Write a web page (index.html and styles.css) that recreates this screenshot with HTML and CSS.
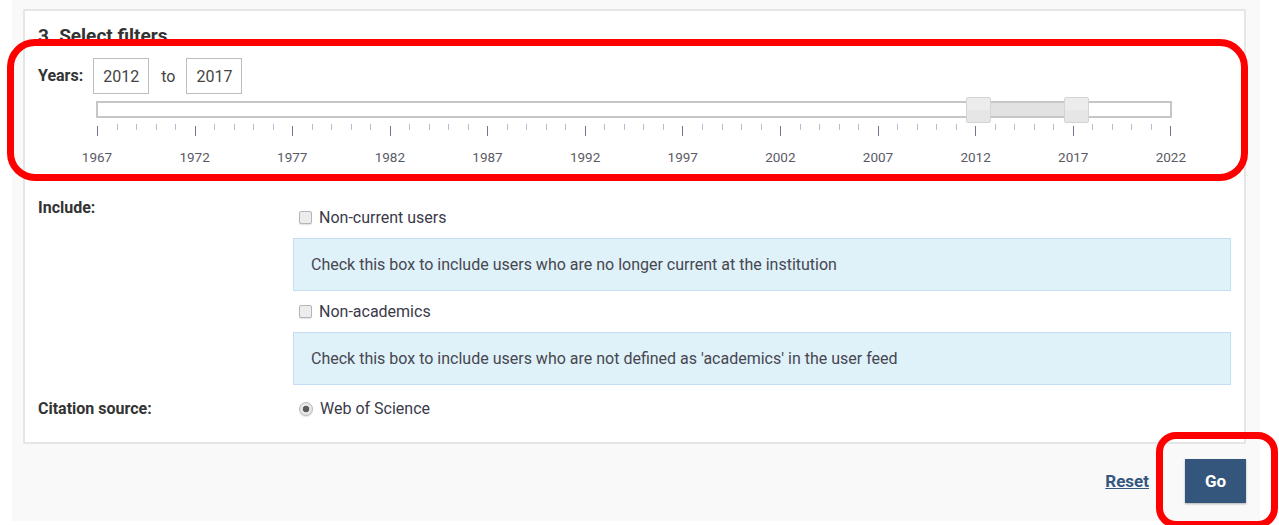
FILE: index.html
```html
<!DOCTYPE html>
<html lang="en">
<head>
<meta charset="utf-8">
<title>Select filters</title>
<link rel="stylesheet" href="styles.css">
</head>
<body>
<div class="page">
  <section class="panel">
    <h3 class="panel-title">3. Select filters</h3>

    <div class="years-row">
      <span class="field-label">Years:</span>
      <input class="year-input" type="text" value="2012">
      <span class="to">to</span>
      <input class="year-input" type="text" value="2017">
    </div>

    <div class="slider">
      <div class="track">
        <div class="range" style="left: 879px; width: 98px;"></div>
        <span class="handle" style="left: 868px;"></span>
        <span class="handle" style="left: 966px;"></span>
      </div>
      <div class="ticks">
        <i class="major"></i><i></i><i></i><i></i><i></i>
        <i class="major"></i><i></i><i></i><i></i><i></i>
        <i class="major"></i><i></i><i></i><i></i><i></i>
        <i class="major"></i><i></i><i></i><i></i><i></i>
        <i class="major"></i><i></i><i></i><i></i><i></i>
        <i class="major"></i><i></i><i></i><i></i><i></i>
        <i class="major"></i><i></i><i></i><i></i><i></i>
        <i class="major"></i><i></i><i></i><i></i><i></i>
        <i class="major"></i><i></i><i></i><i></i><i></i>
        <i class="major"></i><i></i><i></i><i></i><i></i>
        <i class="major"></i><i></i><i></i><i></i><i></i>
        <i class="major"></i>
      </div>
      <div class="tick-labels">
        <span>1967</span><span>1972</span><span>1977</span><span>1982</span>
        <span>1987</span><span>1992</span><span>1997</span><span>2002</span>
        <span>2007</span><span>2012</span><span>2017</span><span>2022</span>
      </div>
    </div>

    <div class="filters">
      <div class="field-label include-label">Include:</div>
      <div class="options include-options">
        <label class="option"><input type="checkbox" class="check"> Non-current users</label>
        <div class="hint">Check this box to include users who are no longer current at the institution</div>
        <label class="option"><input type="checkbox" class="check"> Non-academics</label>
        <div class="hint">Check this box to include users who are not defined as 'academics' in the user feed</div>
      </div>

      <div class="field-label citation-label">Citation source:</div>
      <div class="options citation-options">
        <label class="option"><input type="radio" class="radio" name="source" checked> Web of Science</label>
      </div>
    </div>
  </section>

  <div class="actions">
    <a class="reset" href="#">Reset</a>
    <button class="go" type="button">Go</button>
  </div>
</div>

<div class="callout callout-years"></div>
<div class="callout callout-go"></div>
</body>
</html>
```

FILE: styles.css
```css
html, body {
  margin: 0;
  padding: 0;
  background: #ffffff;
  overflow: hidden;
}

body {
  font-family: Roboto, "Liberation Sans", Arial, sans-serif;
  color: #333333;
  position: relative;
  height: 525px;
}

.page {
  margin-left: 12px;
  width: 1223px;
  padding: 9px 14px 18px 11px;
  background: #f9f9f9;
}

.panel {
  background: #ffffff;
  border: 2px solid #e6e6e6;
  padding: 14px 13px 23px 13px;
}

.panel-title {
  margin: 0;
  font-size: 19px;
  line-height: 22px;
  font-weight: 700;
  color: #333;
}

.field-label {
  font-size: 16px;
  font-weight: 700;
  line-height: 20px;
  color: #333;
}

/* Years inputs */
.years-row {
  display: flex;
  align-items: center;
  margin-top: 11px;
  height: 36px;
}

.years-row .field-label {
  margin-right: 10px;
}

.year-input {
  box-sizing: border-box;
  width: 56px;
  height: 36px;
  border: 1px solid #bdbdbd;
  border-radius: 0;
  padding: 0;
  text-align: center;
  font-family: inherit;
  font-size: 16px;
  color: #444;
  background: #fff;
}

.to {
  font-size: 16px;
  color: #444;
  margin: 0 11px 0 12px;
}

/* Range slider */
.slider {
  margin-top: 7px;
}

.track {
  position: relative;
  box-sizing: border-box;
  margin-left: 58px;
  width: 1076px;
  height: 17px;
  border: 2px solid #c6c6c6;
  background: #fff;
}

.range {
  position: absolute;
  top: 0;
  bottom: 0;
  background: #e2e2e2;
}

.handle {
  position: absolute;
  top: -6px;
  box-sizing: border-box;
  width: 25px;
  height: 26px;
  border: 1px solid #d4d4d4;
  border-radius: 2px;
  background: linear-gradient(#ececec 0 50%, #e6e6e6 50% 100%);
}

.ticks {
  display: flex;
  justify-content: space-between;
  align-items: flex-start;
  margin-left: 59px;
  width: 1075px;
  height: 13px;
  margin-top: 6px;
}

.ticks i {
  display: block;
  width: 1px;
  height: 6px;
  background: #bdb9d6;
}

.ticks i.major {
  height: 10px;
  margin-top: 2px;
  background: #7f6f8c;
}

.tick-labels {
  display: flex;
  justify-content: space-between;
  margin-left: 39px;
  width: 1114px;
  margin-top: 12px;
}

.tick-labels span {
  width: 40px;
  text-align: center;
  font-size: 13.5px;
  line-height: 16px;
  color: #5a5a66;
}

/* Include / citation grid */
.filters {
  display: grid;
  grid-template-columns: 255px 1fr;
  margin-top: 33px;
}

.include-label {
  align-self: start;
}

.options {
  display: flex;
  flex-direction: column;
}

.include-options {
  padding-top: 8px;
}

.citation-label {
  margin-top: 14px;
}

.citation-options {
  margin-top: 12px;
}

.option {
  display: flex;
  align-items: center;
  height: 22px;
  padding-left: 6px;
  font-size: 16px;
  color: #3a3a4a;
}

.check {
  appearance: none;
  -webkit-appearance: none;
  box-sizing: border-box;
  width: 13px;
  height: 13px;
  margin: 1px 7px 0 0;
  border: 1px solid #b4b4b4;
  border-radius: 2px;
  background: #ececec;
  box-shadow: 0 1px 1px rgba(0, 0, 0, 0.12);
}

.radio {
  appearance: none;
  -webkit-appearance: none;
  box-sizing: border-box;
  width: 14px;
  height: 14px;
  margin: 2px 7px 0 0;
  border: 1px solid #b8b8b8;
  border-radius: 50%;
  background: radial-gradient(circle, #5c5c5c 0 3px, #e6e6e6 3.6px);
  box-shadow: 0 1px 1px rgba(0, 0, 0, 0.12);
}

.hint {
  box-sizing: border-box;
  margin: 10px 0 9px 0;
  border: 1px solid #c4dcf4;
  background: #dff1f9;
  padding: 16px 17px;
  font-size: 16px;
  line-height: 19px;
  color: #474750;
}

.hint:last-child {
  margin-bottom: 0;
}

/* Footer actions */
.actions {
  display: flex;
  justify-content: flex-end;
  align-items: center;
  margin-top: 15px;
}

.reset {
  font-size: 17px;
  font-weight: 700;
  color: #35577f;
  text-decoration: underline;
  margin-right: 36px;
}

.go {
  width: 61px;
  height: 44px;
  border: none;
  background: #34567c;
  color: #ffffff;
  font-family: inherit;
  font-size: 17px;
  font-weight: 700;
  box-shadow: 0 1px 2px rgba(0, 0, 0, 0.3);
}

/* Red highlight frames drawn over the form */
.callout {
  position: absolute;
  box-sizing: border-box;
  border: 7px solid #ff0000;
  pointer-events: none;
}

.callout-years {
  left: 7px;
  top: 39px;
  width: 1241px;
  height: 142px;
  border-radius: 28px;
}

.callout-go {
  left: 1156px;
  top: 432px;
  width: 122px;
  height: 96px;
  border-radius: 20px;
}
```
